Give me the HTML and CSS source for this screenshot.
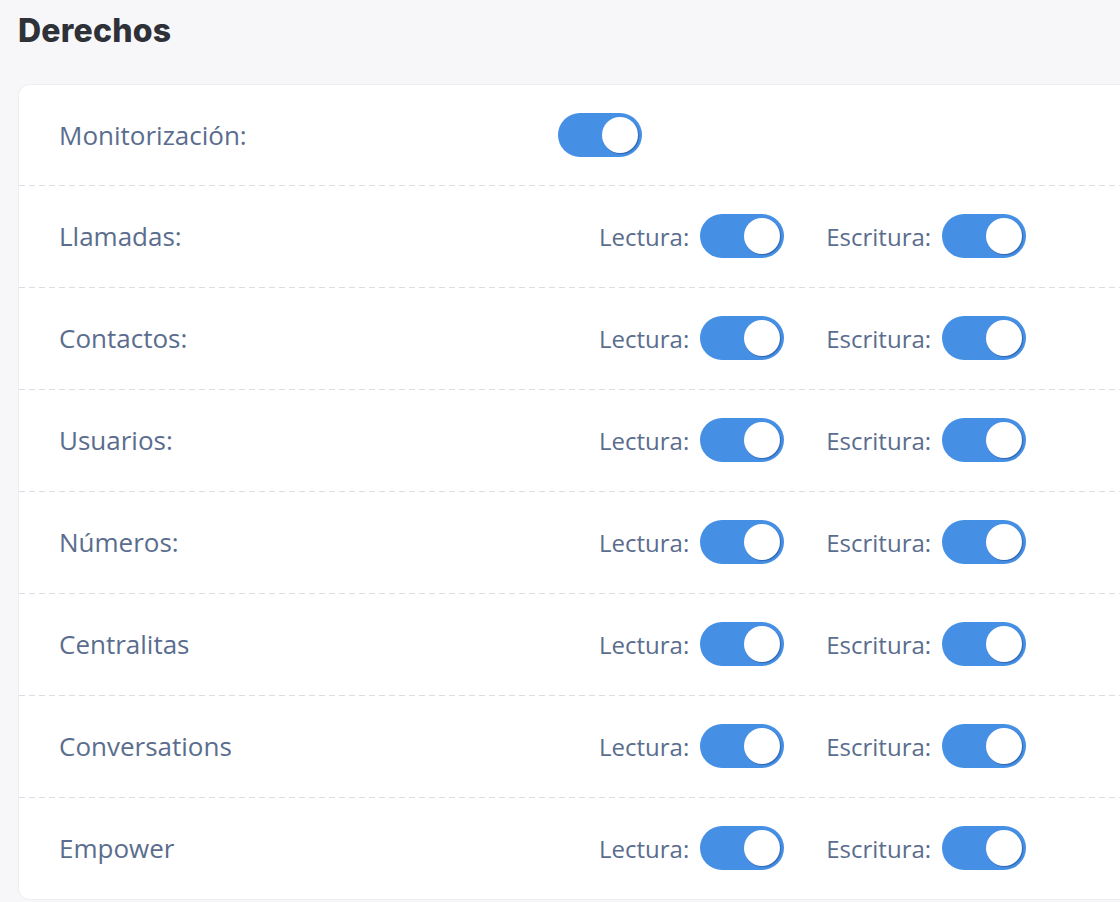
FILE: index.html
```html
<!DOCTYPE html>
<html lang="es">
<head>
  <meta charset="UTF-8">
  <meta name="viewport" content="width=device-width, initial-scale=1.0">
  <title>Derechos</title>
  <link rel="stylesheet" href="styles.css">
</head>
<body>
  <div class="page">
    <h1>Derechos</h1>
    <div class="card">
      <div class="row">
        <span class="row-label">Monitorización:</span>
        <label class="switch"><input type="checkbox" checked><span class="slider"></span></label>
      </div>
      <div class="row">
        <span class="row-label">Llamadas:</span>
        <div class="perms">
          <label class="perm">Lectura: <span class="switch"><input type="checkbox" checked><span class="slider"></span></span></label>
          <label class="perm">Escritura: <span class="switch"><input type="checkbox" checked><span class="slider"></span></span></label>
        </div>
      </div>
      <div class="row">
        <span class="row-label">Contactos:</span>
        <div class="perms">
          <label class="perm">Lectura: <span class="switch"><input type="checkbox" checked><span class="slider"></span></span></label>
          <label class="perm">Escritura: <span class="switch"><input type="checkbox" checked><span class="slider"></span></span></label>
        </div>
      </div>
      <div class="row">
        <span class="row-label">Usuarios:</span>
        <div class="perms">
          <label class="perm">Lectura: <span class="switch"><input type="checkbox" checked><span class="slider"></span></span></label>
          <label class="perm">Escritura: <span class="switch"><input type="checkbox" checked><span class="slider"></span></span></label>
        </div>
      </div>
      <div class="row">
        <span class="row-label">Números:</span>
        <div class="perms">
          <label class="perm">Lectura: <span class="switch"><input type="checkbox" checked><span class="slider"></span></span></label>
          <label class="perm">Escritura: <span class="switch"><input type="checkbox" checked><span class="slider"></span></span></label>
        </div>
      </div>
      <div class="row">
        <span class="row-label">Centralitas</span>
        <div class="perms">
          <label class="perm">Lectura: <span class="switch"><input type="checkbox" checked><span class="slider"></span></span></label>
          <label class="perm">Escritura: <span class="switch"><input type="checkbox" checked><span class="slider"></span></span></label>
        </div>
      </div>
      <div class="row">
        <span class="row-label">Conversations</span>
        <div class="perms">
          <label class="perm">Lectura: <span class="switch"><input type="checkbox" checked><span class="slider"></span></span></label>
          <label class="perm">Escritura: <span class="switch"><input type="checkbox" checked><span class="slider"></span></span></label>
        </div>
      </div>
      <div class="row">
        <span class="row-label">Empower</span>
        <div class="perms">
          <label class="perm">Lectura: <span class="switch"><input type="checkbox" checked><span class="slider"></span></span></label>
          <label class="perm">Escritura: <span class="switch"><input type="checkbox" checked><span class="slider"></span></span></label>
        </div>
      </div>
    </div>
  </div>
</body>
</html>
```
FILE: styles.css
```css
html, body {
  margin: 0;
  padding: 0;
  background: #f7f7fa;
  overflow: hidden;
}
.page {
  padding: 11px 0 0 18px;
  font-family: "Open Sans", "Noto Sans", Arial, sans-serif;
}
h1 {
  font-family: Inter, "Open Sans", sans-serif;
  font-weight: 800;
  font-size: 32px;
  line-height: 40px;
  letter-spacing: 0.2px;
  color: #2f3138;
  margin: 0 0 33px 0;
}
.card {
  width: 1200px;
  background: #fff;
  border: 1px solid #eceef3;
  border-radius: 12px;
  box-sizing: border-box;
}
.row {
  display: flex;
  align-items: center;
  height: 102px;
  padding-left: 40px;
  background-image: repeating-linear-gradient(90deg, #dcdee3 0 6px, transparent 6px 10px);
  background-size: 100% 1px;
  background-repeat: no-repeat;
  background-position: top left;
}
.row:first-child {
  background-image: none;
  height: 100px;
}
.row-label {
  width: 499px;
  font-size: 26px;
  color: #5a6d8e;
}
.perms {
  display: flex;
  align-items: center;
  gap: 42px;
  padding-left: 41px;
}
.perm {
  display: flex;
  align-items: center;
  gap: 11px;
  font-size: 24px;
  color: #5a6d8e;
}
.switch {
  position: relative;
  display: inline-block;
  width: 84px;
  height: 44px;
}
.switch input {
  opacity: 0;
  width: 0;
  height: 0;
}
.slider {
  position: absolute;
  inset: 0;
  background: #458fe5;
  border-radius: 22px;
  cursor: pointer;
}
.slider::before {
  content: "";
  position: absolute;
  width: 36px;
  height: 36px;
  top: 4px;
  left: 4px;
  background: #fff;
  border-radius: 50%;
  box-shadow: 1px 1px 1px rgba(20, 50, 110, 0.45);
  transition: transform 0.2s ease;
}
.switch input:checked + .slider::before {
  transform: translateX(40px);
}
```
